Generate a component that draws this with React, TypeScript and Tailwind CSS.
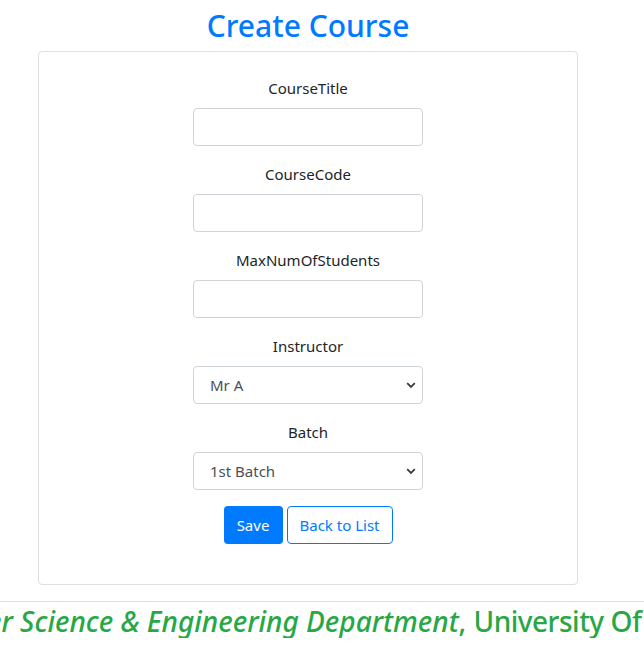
import React from 'react';

const font = { fontFamily: '"Segoe UI", "Noto Sans", "Open Sans", sans-serif' };

function Chevron() {
  return (
    <svg width="10" height="7" viewBox="0 0 10 7" className="pointer-events-none absolute right-[7px] top-[16px]">
      <path d="M1.2 1.2 L5 5 L8.8 1.2" fill="none" stroke="#3c3c3c" strokeWidth="1.8" />
    </svg>
  );
}

function Field({ label, children }: { label: string; children: React.ReactNode }) {
  return (
    <div className="mb-4 flex flex-col items-center">
      <label className="mb-2 text-[15px] leading-6 text-[#212529]">{label}</label>
      {children}
    </div>
  );
}

function TextBox() {
  return <input type="text" className="h-[38px] w-[230px] rounded border border-[#ced4da] bg-white px-3 text-[15px] text-[#495057] outline-none" />;
}

function Select({ options }: { options: string[] }) {
  return (
    <div className="relative w-[230px]">
      <select className="h-[38px] w-full appearance-none rounded border border-[#ced4da] bg-white pl-4 text-[15px] text-[#495057] outline-none">
        {options.map(o => (
          <option key={o}>{o}</option>
        ))}
      </select>
      <Chevron />
    </div>
  );
}

export default function App() {
  return (
    <div className="min-h-[660px] w-[644px] overflow-hidden bg-white" style={font}>
      <h2 className="w-[616px] pt-[7px] text-center text-[30px] font-medium leading-[38px] text-[#007bff]">Create Course</h2>
      <div className="ml-[38px] mt-[6px] w-[540px] rounded border border-[#dfdfdf] pb-[40px] pt-[24px]">
        <Field label="CourseTitle"><TextBox /></Field>
        <Field label="CourseCode"><TextBox /></Field>
        <Field label="MaxNumOfStudents"><TextBox /></Field>
        <Field label="Instructor"><Select options={['Mr A', 'Mr B']} /></Field>
        <Field label="Batch"><Select options={['1st Batch', '2nd Batch']} /></Field>
        <div className="flex justify-center gap-1">
          <button className="h-[38px] w-[59px] rounded bg-[#007bff] text-[15px] text-white">Save</button>
          <button className="h-[38px] w-[106px] rounded border border-[#007bff] bg-white text-[15px] text-[#007bff]">Back to List</button>
        </div>
      </div>
      <div className="mt-[16px] border-t border-[#dee2e6]">
        <div className="overflow-hidden whitespace-nowrap">
          <h3 className="ml-[-113px] pt-[2px] text-[28px] font-medium leading-[34px] text-[#28a745]">
            <i>Computer Science &amp; Engineering Department</i>, <span className="tracking-[-0.5px]">University Of Rajshahi</span>
          </h3>
        </div>
      </div>
    </div>
  );
}
